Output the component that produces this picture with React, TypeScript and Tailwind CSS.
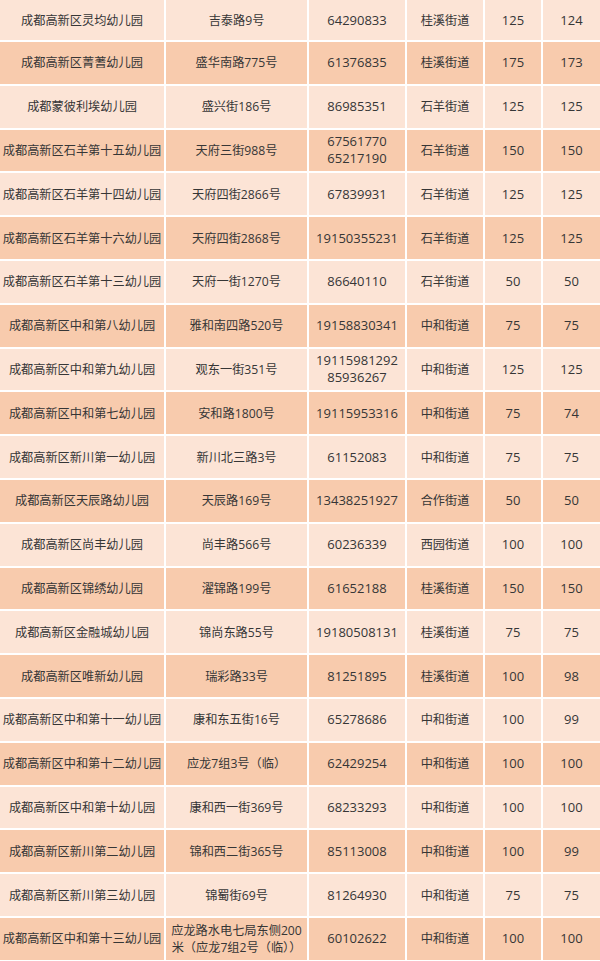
import React from "react";

type Row = [string, React.ReactNode, React.ReactNode, string, string, string];

const rows: Row[] = [
  ["成都高新区灵均幼儿园", "吉泰路9号", "64290833", "桂溪街道", "125", "124"],
  ["成都高新区菁蓍幼儿园", "盛华南路775号", "61376835", "桂溪街道", "175", "173"],
  ["成都蒙彼利埃幼儿园", "盛兴街186号", "86985351", "石羊街道", "125", "125"],
  ["成都高新区石羊第十五幼儿园", "天府三街988号", <>67561770<br />65217190</>, "石羊街道", "150", "150"],
  ["成都高新区石羊第十四幼儿园", "天府四街2866号", "67839931", "石羊街道", "125", "125"],
  ["成都高新区石羊第十六幼儿园", "天府四街2868号", "19150355231", "石羊街道", "125", "125"],
  ["成都高新区石羊第十三幼儿园", "天府一街1270号", "86640110", "石羊街道", "50", "50"],
  ["成都高新区中和第八幼儿园", "雅和南四路520号", "19158830341", "中和街道", "75", "75"],
  ["成都高新区中和第九幼儿园", "观东一街351号", <>19115981292<br />85936267</>, "中和街道", "125", "125"],
  ["成都高新区中和第七幼儿园", "安和路1800号", "19115953316", "中和街道", "75", "74"],
  ["成都高新区新川第一幼儿园", "新川北三路3号", "61152083", "中和街道", "75", "75"],
  ["成都高新区天辰路幼儿园", "天辰路169号", "13438251927", "合作街道", "50", "50"],
  ["成都高新区尚丰幼儿园", "尚丰路566号", "60236339", "西园街道", "100", "100"],
  ["成都高新区锦绣幼儿园", "濯锦路199号", "61652188", "桂溪街道", "150", "150"],
  ["成都高新区金融城幼儿园", "锦尚东路55号", "19180508131", "桂溪街道", "75", "75"],
  ["成都高新区唯新幼儿园", "瑞彩路33号", "81251895", "桂溪街道", "100", "98"],
  ["成都高新区中和第十一幼儿园", "康和东五街16号", "65278686", "中和街道", "100", "99"],
  ["成都高新区中和第十二幼儿园", "应龙7组3号（临）", "62429254", "中和街道", "100", "100"],
  ["成都高新区中和第十幼儿园", "康和西一街369号", "68233293", "中和街道", "100", "100"],
  ["成都高新区新川第二幼儿园", "锦和西二街365号", "85113008", "中和街道", "100", "99"],
  ["成都高新区新川第三幼儿园", "锦蜀街69号", "81264930", "中和街道", "75", "75"],
  ["成都高新区中和第十三幼儿园", <>应龙路水电七局东侧200<br />米（应龙7组2号（临））</>, "60102622", "中和街道", "100", "100"],
];

const font = { fontFamily: '"Open Sans", "Noto Sans CJK SC", sans-serif' };

export default function App() {
  return (
    <div
      className="w-[600px] h-[961px] overflow-hidden bg-white grid grid-cols-[164px_141px_96px_76px_56px_57px] grid-rows-[40px_repeat(21,41.8px)] gap-[2px] text-[#363636]"
      style={font}
    >
      {rows.map((r, i) => {
        const bg = i % 2 === 0 ? "bg-[#fce4d6]" : "bg-[#f8cbad]";
        return (
          <React.Fragment key={i}>
            <div className={`${bg} flex items-center justify-center whitespace-nowrap text-[12.2px] leading-[17px]`}>{r[0]}</div>
            <div className={`${bg} flex items-center justify-center text-center whitespace-nowrap text-[12.2px] leading-[17px]`}>{r[1]}</div>
            <div className={`${bg} flex items-center justify-center text-center whitespace-nowrap text-[13px] leading-[17px]`}>{r[2]}</div>
            <div className={`${bg} flex items-center justify-center whitespace-nowrap text-[12.2px] leading-[17px]`}>{r[3]}</div>
            <div className={`${bg} flex items-center justify-center whitespace-nowrap text-[13px] leading-[17px]`}>{r[4]}</div>
            <div className={`${bg} flex items-center justify-center whitespace-nowrap text-[13px] leading-[17px]`}>{r[5]}</div>
          </React.Fragment>
        );
      })}
    </div>
  );
}
